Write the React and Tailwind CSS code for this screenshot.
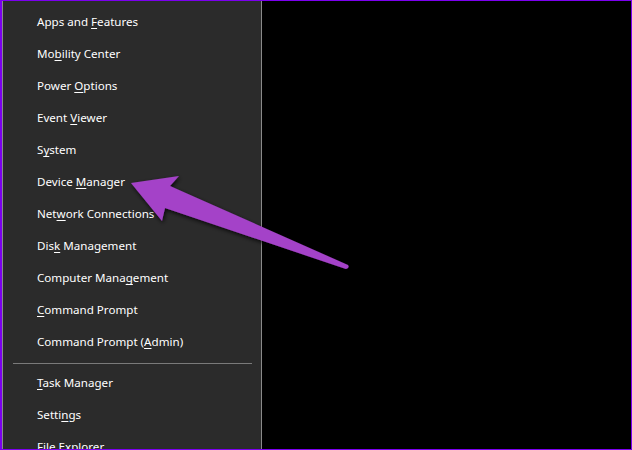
import React from 'react';

const items = [
  ['Apps and ', 'F', 'eatures'],
  ['Mo', 'b', 'ility Center'],
  ['Power ', 'O', 'ptions'],
  ['Event ', 'V', 'iewer'],
  ['S', 'y', 'stem'],
  ['Device ', 'M', 'anager'],
  ['Net', 'w', 'ork Connections'],
  ['Dis', 'k', ' Management'],
  ['Computer Mana', 'g', 'ement'],
  ['', 'C', 'ommand Prompt'],
  ['Command Prompt (', 'A', 'dmin)'],
];

const lower = [
  ['', 'T', 'ask Manager'],
  ['Setti', 'n', 'gs'],
  ['File ', 'E', 'xplorer'],
];

const MenuItem = ({ parts }) => (
  <div className="h-[32px] flex items-center pl-[34px] text-[11.6px] text-white whitespace-pre">
    <span>
      {parts[0]}
      <span className="underline underline-offset-2">{parts[1]}</span>
      {parts[2]}
    </span>
  </div>
);

const App = () => {
  return (
    <div
      className="relative w-[632px] h-[450px] overflow-hidden flex border-t border-b border-r border-l-2 border-[#7b00ee]"
      style={{ fontFamily: '"Noto Sans", "Open Sans", sans-serif' }}
    >
      {/* Win+X menu */}
      <div className="w-[260px] shrink-0 bg-[#2b2b2b] border-l border-r border-[#8a8a8a] pt-[5px]">
        {items.map((p, i) => (
          <MenuItem key={i} parts={p} />
        ))}
        <div className="h-px bg-[#7a7a7a] mt-[5px] mb-[3px] ml-[10px] w-[239px]" />
        {lower.map((p, i) => (
          <MenuItem key={i} parts={p} />
        ))}
      </div>

      {/* Desktop */}
      <div className="flex-1 bg-black" />

      {/* Pointer arrow */}
      <svg className="absolute left-0 top-0" width="632" height="450" viewBox="0 0 632 450">
        <defs>
          <filter id="sh" x="-20%" y="-20%" width="140%" height="140%">
            <feDropShadow dx="1" dy="2" stdDeviation="2" floodColor="#000" floodOpacity="0.8" />
          </filter>
        </defs>
        <path
          d="M129 182 L177 175 L168 185 L346 264 Q348 267 344 268 L163 207 L160 220 Z"
          fill="#a443c8"
          filter="url(#sh)"
        />
      </svg>
    </div>
  );
};

export default App;
